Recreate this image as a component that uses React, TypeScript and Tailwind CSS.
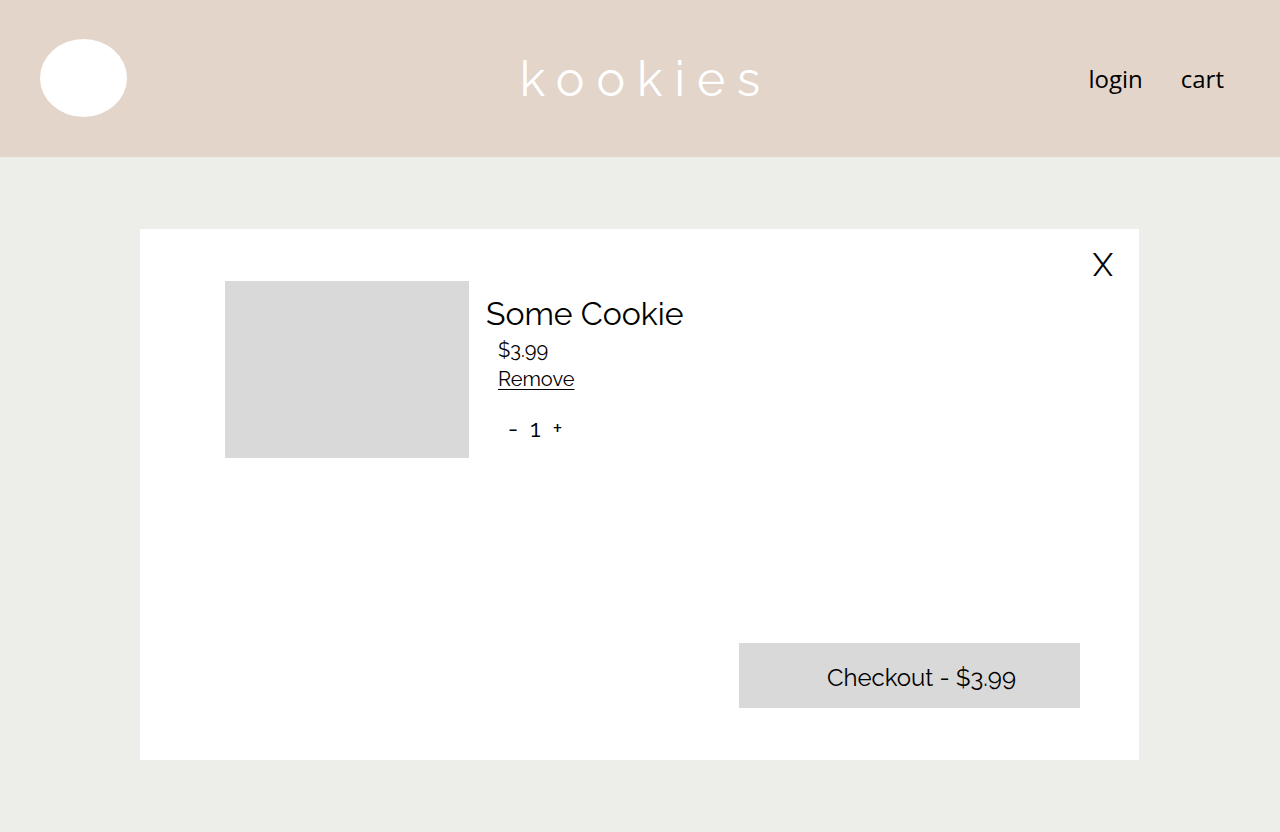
export default function App() {
  return (
    <div className="flex min-h-screen flex-col bg-[#edeee9] font-['Raleway','Lato',sans-serif] text-black">
      <header className="grid grid-cols-3 items-center bg-[#e3d5ca] pt-[39px] pr-14 pb-10 pl-10">
        <div className="h-[78px] w-[87px] rounded-[50%] bg-white" />
        <h1 className="justify-self-center whitespace-nowrap pt-px pl-7 text-5xl tracking-[12px] text-white">kookies</h1>
        <nav className="flex justify-end gap-[38px] pt-0.5 font-['Open_Sans','Noto_Sans',sans-serif] text-2xl">
          <a href="#login">login</a>
          <a href="#cart">cart</a>
        </nav>
      </header>
      <main className="flex flex-1 flex-col py-[72px] pr-[141px] pl-[140px]">
        <section className="flex flex-1 flex-col justify-between bg-white pt-[52px] pr-[59px] pb-[52px] pl-[85px]">
          <div className="flex items-start gap-[17px]">
            <div className="h-[177px] w-[244px] bg-[#d9d9d9]" />
            <div className="flex-1 pt-[14px]">
              <h2 className="text-[32px] leading-[38px]">Some Cookie</h2>
              <div className="flex flex-col items-start pt-[3px] pl-3 text-xl leading-[29px]">
                <p>$3.99</p>
                <button type="button" className="underline decoration-1 underline-offset-3">Remove</button>
                <div className="mt-5 flex gap-3 pl-[10px] text-2xl leading-[29px]">
                  <button type="button" aria-label="Decrease quantity">-</button>
                  <span>1</span>
                  <button type="button" aria-label="Increase quantity">+</button>
                </div>
              </div>
            </div>
            <button type="button" aria-label="Close" className="-mt-[35px] -mr-[33px] text-[32px] leading-[38px]">X</button>
          </div>
          <button type="button" className="h-[65px] w-[341px] self-end bg-[#d9d9d9] pt-1 pl-6 text-2xl">Checkout - $3.99</button>
        </section>
      </main>
    </div>
  );
}
